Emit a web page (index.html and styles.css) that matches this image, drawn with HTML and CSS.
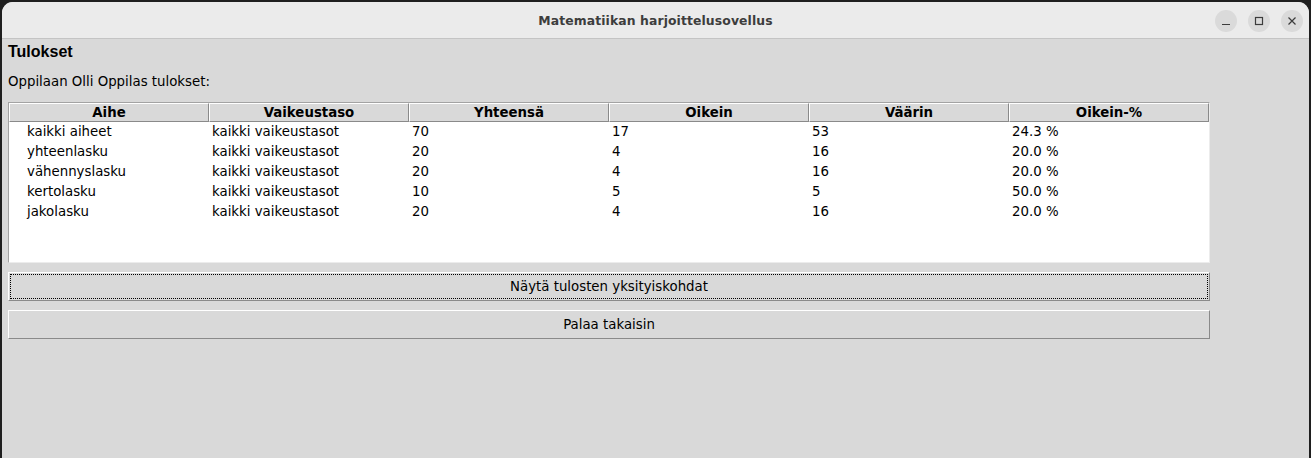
FILE: index.html
```html
<!DOCTYPE html>
<html lang="fi">
<head>
<meta charset="utf-8">
<title>Matematiikan harjoittelusovellus</title>
<link rel="stylesheet" href="styles.css">
</head>
<body>
<div class="window">
  <div class="titlebar">
    <div class="title">Matematiikan harjoittelusovellus</div>
    <div class="controls">
      <span class="ctl"><svg width="12" height="12" viewBox="0 0 12 12"><line x1="2" y1="9.5" x2="10" y2="9.5" stroke="#3c3c3c" stroke-width="1.2"/></svg></span>
      <span class="ctl"><svg width="12" height="12" viewBox="0 0 12 12"><rect x="2.5" y="2.5" width="7" height="7" fill="none" stroke="#3c3c3c" stroke-width="1.2"/></svg></span>
      <span class="ctl"><svg width="12" height="12" viewBox="0 0 12 12"><path d="M2.5 2.5 L9.5 9.5 M9.5 2.5 L2.5 9.5" stroke="#3c3c3c" stroke-width="1.2"/></svg></span>
    </div>
  </div>
  <div class="content">
    <div class="heading">Tulokset</div>
    <div class="label">Oppilaan Olli Oppilas tulokset:</div>
    <div class="tree">
      <div class="thead">
        <div class="th">Aihe</div>
        <div class="th">Vaikeustaso</div>
        <div class="th">Yhteensä</div>
        <div class="th">Oikein</div>
        <div class="th">Väärin</div>
        <div class="th">Oikein-%</div>
      </div>
      <div class="tbody">
        <div class="tr"><div class="td first">kaikki aiheet</div><div class="td">kaikki vaikeustasot</div><div class="td">70</div><div class="td">17</div><div class="td">53</div><div class="td">24.3 %</div></div>
        <div class="tr"><div class="td first">yhteenlasku</div><div class="td">kaikki vaikeustasot</div><div class="td">20</div><div class="td">4</div><div class="td">16</div><div class="td">20.0 %</div></div>
        <div class="tr"><div class="td first">vähennyslasku</div><div class="td">kaikki vaikeustasot</div><div class="td">20</div><div class="td">4</div><div class="td">16</div><div class="td">20.0 %</div></div>
        <div class="tr"><div class="td first">kertolasku</div><div class="td">kaikki vaikeustasot</div><div class="td">10</div><div class="td">5</div><div class="td">5</div><div class="td">50.0 %</div></div>
        <div class="tr"><div class="td first">jakolasku</div><div class="td">kaikki vaikeustasot</div><div class="td">20</div><div class="td">4</div><div class="td">16</div><div class="td">20.0 %</div></div>
      </div>
    </div>
    <button class="btn focused"><span class="focus">Näytä tulosten yksityiskohdat</span></button>
    <button class="btn"><span class="focus plain">Palaa takaisin</span></button>
  </div>
</div>
</body>
</html>
```
FILE: styles.css
```css
html, body {
  margin: 0;
  padding: 0;
  height: 100%;
  background: #1f1f1f;
  overflow: hidden;
}
body {
  font-family: "DejaVu Sans", sans-serif;
  font-size: 13.33px;
  color: #000;
}
.window {
  margin: 2px 2px 0 2px;
  height: 456px;
  background: #d9d9d9;
  border-radius: 11px 11px 0 0;
  overflow: hidden;
  display: flex;
  flex-direction: column;
}
.titlebar {
  height: 36px;
  background: #ebebeb;
  border-bottom: 1px solid #c4c4c4;
  display: flex;
  align-items: center;
  justify-content: center;
  position: relative;
}
.title {
  font-family: "DejaVu Sans", sans-serif;
  font-weight: bold;
  font-size: 12.4px;
  color: #3d3d3d;
  letter-spacing: 0.1px;
}
.controls {
  position: absolute;
  right: 6px;
  top: 8px;
  display: flex;
  gap: 11px;
}
.ctl {
  width: 22px;
  height: 22px;
  border-radius: 50%;
  background: #dadada;
  display: flex;
  align-items: center;
  justify-content: center;
}
.content {
  padding: 0 0 0 6px;
  display: flex;
  flex-direction: column;
  align-items: flex-start;
}
.heading {
  font-family: "Liberation Sans", sans-serif;
  font-weight: bold;
  font-size: 16px;
  height: 24px;
  line-height: 24px;
  margin-top: 1px;
}
.label {
  height: 20px;
  line-height: 20px;
  margin-top: 8px;
}
.tree {
  margin-top: 10px;
  width: 1200px;
  border-top: 1px solid #a3a3a3;
  border-left: 1px solid #a3a3a3;
  border-right: 1px solid #ececec;
  border-bottom: 1px solid #ececec;
  background: #fff;
}
.thead {
  display: flex;
  background: #d9d9d9;
}
.th {
  box-sizing: border-box;
  width: 200px;
  height: 19px;
  line-height: 17px;
  text-align: center;
  font-weight: bold;
  border-top: 1px solid #fff;
  border-left: 1px solid #fff;
  border-right: 1px solid #8a8a8a;
  border-bottom: 1px solid #8a8a8a;
}
.tbody {
  height: 140px;
}
.tr {
  display: flex;
  height: 20px;
  line-height: 20px;
}
.td {
  width: 200px;
  box-sizing: border-box;
  padding-left: 3px;
  white-space: nowrap;
}
.td.first {
  padding-left: 18px;
}
.btn {
  font-family: "DejaVu Sans", sans-serif;
  font-size: 13.33px;
  color: #000;
  width: 1202px;
  height: 29px;
  margin: 9px 0 0 0;
  padding: 1px;
  background: #d9d9d9;
  border-top: 1px solid #fff;
  border-left: 1px solid #fff;
  border-right: 1px solid #8a8a8a;
  border-bottom: 1px solid #8a8a8a;
  border-radius: 0;
  display: flex;
}
.btn + .btn {
  margin-top: 9px;
}
.focus {
  flex: 1;
  display: flex;
  align-items: center;
  justify-content: center;
  border: 1px dotted #000;
}
.focus.plain {
  border-color: transparent;
}
```
